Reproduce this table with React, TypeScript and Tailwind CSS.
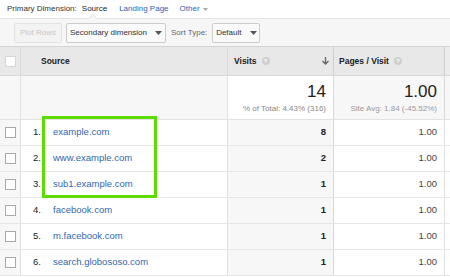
import React from 'react';

const cols = 'grid grid-cols-[21px_207px_106px_111px_1fr]';

const rows = [
  { n: 1, source: 'example.com', visits: 8 },
  { n: 2, source: 'www.example.com', visits: 2 },
  { n: 3, source: 'sub1.example.com', visits: 1 },
  { n: 4, source: 'facebook.com', visits: 1 },
  { n: 5, source: 'm.facebook.com', visits: 1 },
  { n: 6, source: 'search.globososo.com', visits: 1 },
];

function Help() {
  return (
    <span className="ml-[5px] inline-flex h-[8px] w-[8px] items-center justify-center rounded-full bg-[#cfcfcf] text-[6px] font-bold leading-none text-white">
      ?
    </span>
  );
}

function Caret({ color = '#555' }: { color?: string }) {
  return (
    <svg width="7" height="4" viewBox="0 0 7 4" className="ml-[8px]">
      <path d="M0 0h7L3.5 4z" fill={color} />
    </svg>
  );
}

function Checkbox({ light }: { light?: boolean }) {
  return (
    <span
      className={
        'block h-[11px] w-[11px] bg-white border ' +
        (light ? 'border-[#d6d6d6] bg-[#f3f3f3]' : 'border-[#a9a9a9]')
      }
    />
  );
}

export default function App() {
  return (
    <div className="w-[450px] h-[277px] overflow-hidden bg-white text-[#333]" style={{ fontFamily: '"Liberation Sans", Arial, sans-serif' }}>
      {/* primary dimension tabs */}
      <div className="flex h-[18px] items-center pl-[7px] text-[8px]">
        <span className="text-[#333]">Primary Dimension:</span>
        <span className="ml-[5px] text-[#222]">Source</span>
        <span className="ml-[12px] text-[#2d5fb8]">Landing Page</span>
        <span className="ml-[11px] flex items-center text-[#2d5fb8]">
          Other
          <svg width="5" height="3" viewBox="0 0 5 3" className="ml-[3px]">
            <path d="M0 0h5L2.5 3z" fill="#aaa" />
          </svg>
        </span>
      </div>

      {/* toolbar */}
      <div className="relative flex h-[28px] items-start gap-[4px] border-t border-[#e4e4e4] bg-[#f6f6f6] pl-[14px] pt-[4px] text-[8px]">
        <span className="absolute left-[88px] top-[-5px] h-0 w-0 border-x-[5px] border-b-[5px] border-x-transparent border-b-[#e4e4e4]" />
        <span className="absolute left-[89px] top-[-4px] h-0 w-0 border-x-[4px] border-b-[4px] border-x-transparent border-b-[#f6f6f6]" />
        <button className="flex h-[20px] w-[48px] items-center justify-center rounded-[2px] border border-[#e2e2e2] bg-[#f3f3f3] text-[#c8c8c8]">
          Plot Rows
        </button>
        <button className="flex h-[20px] w-[100px] items-center justify-center rounded-[2px] border border-[#cdcdcd] bg-[#fafafa] text-[#333]">
          Secondary dimension
          <Caret />
        </button>
        <span className="ml-[1px] flex h-[20px] items-center text-[#666]">Sort Type:</span>
        <button className="ml-[1px] flex h-[20px] w-[48px] items-center justify-center rounded-[2px] border border-[#cdcdcd] bg-[#fafafa] text-[#333]">
          Default
          <Caret />
        </button>
      </div>

      {/* table */}
      <div className="border-t border-[#d6d6d6]">
        {/* header */}
        <div className={cols + ' h-[29px] bg-[#e8e8e8] text-[8.5px] font-bold text-[#222] border-b border-[#d9d9d9]'}>
          <div className="flex items-center justify-center border-r border-[#dadada]">
            <Checkbox light />
          </div>
          <div className="flex items-center pl-[20px] border-r border-[#dadada]">Source</div>
          <div className="flex items-center pl-[6px] pr-[4px] border-r border-[#cfcfcf]">
            Visits
            <Help />
            <svg width="7" height="8" viewBox="0 0 7 8" className="ml-auto">
              <path d="M3.5 0v7M0.5 4l3 3 3-3" stroke="#666" strokeWidth="1.3" fill="none" />
            </svg>
          </div>
          <div className="flex items-center pl-[5px] border-r border-[#cfcfcf]">
            Pages / Visit
            <Help />
          </div>
          <div className="bg-[#ececec]" />
        </div>

        {/* summary */}
        <div className={cols + ' h-[44px] bg-[#f7f7f7] border-b border-[#e2e2e2]'}>
          <div className="border-r border-[#e2e2e2]" />
          <div className="border-r border-[#e2e2e2]" />
          <div className="flex flex-col items-end justify-center bg-white pr-[7px] border-r border-[#d9d9d9]">
            <span className="text-[17px] leading-[18px] text-[#222]">14</span>
            <span className="mt-[3px] text-[8px] leading-[9px] text-[#888]">% of Total: 4.43% (316)</span>
          </div>
          <div className="flex flex-col items-end justify-center pr-[7px] border-r border-[#d9d9d9]">
            <span className="text-[17px] leading-[18px] text-[#222]">1.00</span>
            <span className="mt-[3px] text-[8px] leading-[9px] text-[#999]">Site Avg: 1.84 (-45.52%)</span>
          </div>
          <div />
        </div>

        {/* rows */}
        <div className="relative">
          {rows.map((r) => (
            <div key={r.n} className={cols + ' h-[26px] border-b border-[#e6e6e6] text-[9.5px]'}>
              <div className="flex items-center justify-center bg-[#f7f7f7] border-r border-[#e0e0e0]">
                <Checkbox />
              </div>
              <div className="flex items-center border-r border-[#e0e0e0]">
                <span className="w-[20px] text-right text-[#222]">{r.n}.</span>
                <span className="ml-[12px] text-[#3067ae]">{r.source}</span>
              </div>
              <div className="flex items-center justify-end bg-[#f7f7f7] pr-[7px] font-bold text-[#222] border-r border-[#d9d9d9]">
                {r.visits}
              </div>
              <div className="flex items-center justify-end pr-[7px] text-[#444] border-r border-[#e0e0e0]">1.00</div>
              <div />
            </div>
          ))}
          <div className="pointer-events-none absolute left-[42px] top-[-4px] h-[82px] w-[115px] border-[3px] border-[#5cdc00]" />
        </div>
      </div>
    </div>
  );
}
